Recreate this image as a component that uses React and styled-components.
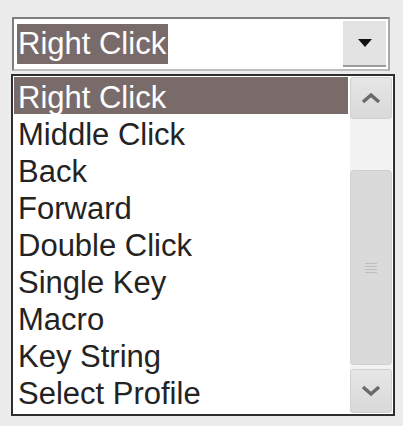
import React from "react";
import styled, { createGlobalStyle } from "styled-components";

const Global = createGlobalStyle`
  html, body { margin: 0; padding: 0; background: #ececec; }
  body { font-family: "Liberation Sans", Arial, sans-serif; }
`;

const Page = styled.div`
  width: 403px;
  height: 426px;
  box-sizing: border-box;
  padding: 17px 8px 0 11px;
  display: flex;
  flex-direction: column;
  gap: 3px;
`;

const Combo = styled.div`
  margin-left: 1px;
  width: 378px;
  height: 54px;
  box-sizing: border-box;
  border: 2px solid #7e7e7e;
  border-right-color: #a9a9a9;
  border-bottom-color: #bdbdbd;
  background: #fff;
  display: flex;
  align-items: center;
  padding: 1px 2px 2px 3px;
`;

const ComboText = styled.div`
  flex: 1;
  display: flex;
  align-items: center;
`;

const Selected = styled.span`
  background: #7a6b6b;
  color: #fff;
  font-size: 31px;
  line-height: 40px;
  padding: 0 2px 0 1px;
`;

const DropButton = styled.div`
  width: 43px;
  height: 46px;
  background: #e3e3e3;
  border-bottom: 2px solid #9c9c9c;
  box-sizing: border-box;
  display: flex;
  align-items: center;
  justify-content: center;
`;

const List = styled.div`
  width: 384px;
  height: 342px;
  box-sizing: border-box;
  border: 2px solid #2e2e2e;
  background: #fff;
  display: flex;
  padding: 1px;
`;

const Items = styled.div`
  flex: 1;
  display: flex;
  flex-direction: column;
`;

const Item = styled.div`
  height: 37px;
  line-height: 42px;
  font-size: 31px;
  padding-left: 4px;
  color: ${(p) => (p.$active ? "#fff" : "#232323")};
  background: ${(p) => (p.$active ? "#7a6b6b" : "transparent")};
  white-space: nowrap;
`;

const Scrollbar = styled.div`
  width: 42px;
  margin-left: 2px;
  background: #f2f2f2;
  display: flex;
  flex-direction: column;
`;

const ArrowButton = styled.div`
  height: ${(p) => p.$h}px;
  box-sizing: border-box;
  background: linear-gradient(#e6e6e6, #d9d9d9);
  border: 1px solid #d0d0d0;
  border-radius: 3px;
  display: flex;
  align-items: center;
  justify-content: center;
`;

const Track = styled.div`
  flex: 1;
  display: flex;
  flex-direction: column;
  padding: 51px 0 4px;
`;

const Thumb = styled.div`
  flex: 1;
  background: #dadada;
  border: 1px solid #cfcfcf;
  border-radius: 4px;
  box-sizing: border-box;
  display: flex;
  flex-direction: column;
  align-items: center;
  justify-content: center;
  gap: 2px;
`;

const Grip = styled.div`
  width: 12px;
  height: 1px;
  background: #bdbdbd;
`;

const items = [
  "Right Click",
  "Middle Click",
  "Back",
  "Forward",
  "Double Click",
  "Single Key",
  "Macro",
  "Key String",
  "Select Profile",
];

export default function App() {
  return (
    <>
      <Global />
      <Page>
        <Combo>
          <ComboText>
            <Selected>Right Click</Selected>
          </ComboText>
          <DropButton>
            <svg width="16" height="10" viewBox="0 0 16 10">
              <path d="M1 1 L15 1 L8 9 Z" fill="#111" />
            </svg>
          </DropButton>
        </Combo>
        <List>
          <Items>
            {items.map((t, i) => (
              <Item key={t} $active={i === 0}>
                {t}
              </Item>
            ))}
          </Items>
          <Scrollbar>
            <ArrowButton $h={42}>
              <svg width="22" height="14" viewBox="0 0 22 14">
                <path d="M3 11 L11 4 L19 11" fill="none" stroke="#6a6a6a" strokeWidth="3.5" />
              </svg>
            </ArrowButton>
            <Track>
              <Thumb>
                <Grip />
                <Grip />
                <Grip />
                <Grip />
              </Thumb>
            </Track>
            <ArrowButton $h={44}>
              <svg width="22" height="14" viewBox="0 0 22 14">
                <path d="M3 3 L11 10 L19 3" fill="none" stroke="#6a6a6a" strokeWidth="3.5" />
              </svg>
            </ArrowButton>
          </Scrollbar>
        </List>
      </Page>
    </>
  );
}
